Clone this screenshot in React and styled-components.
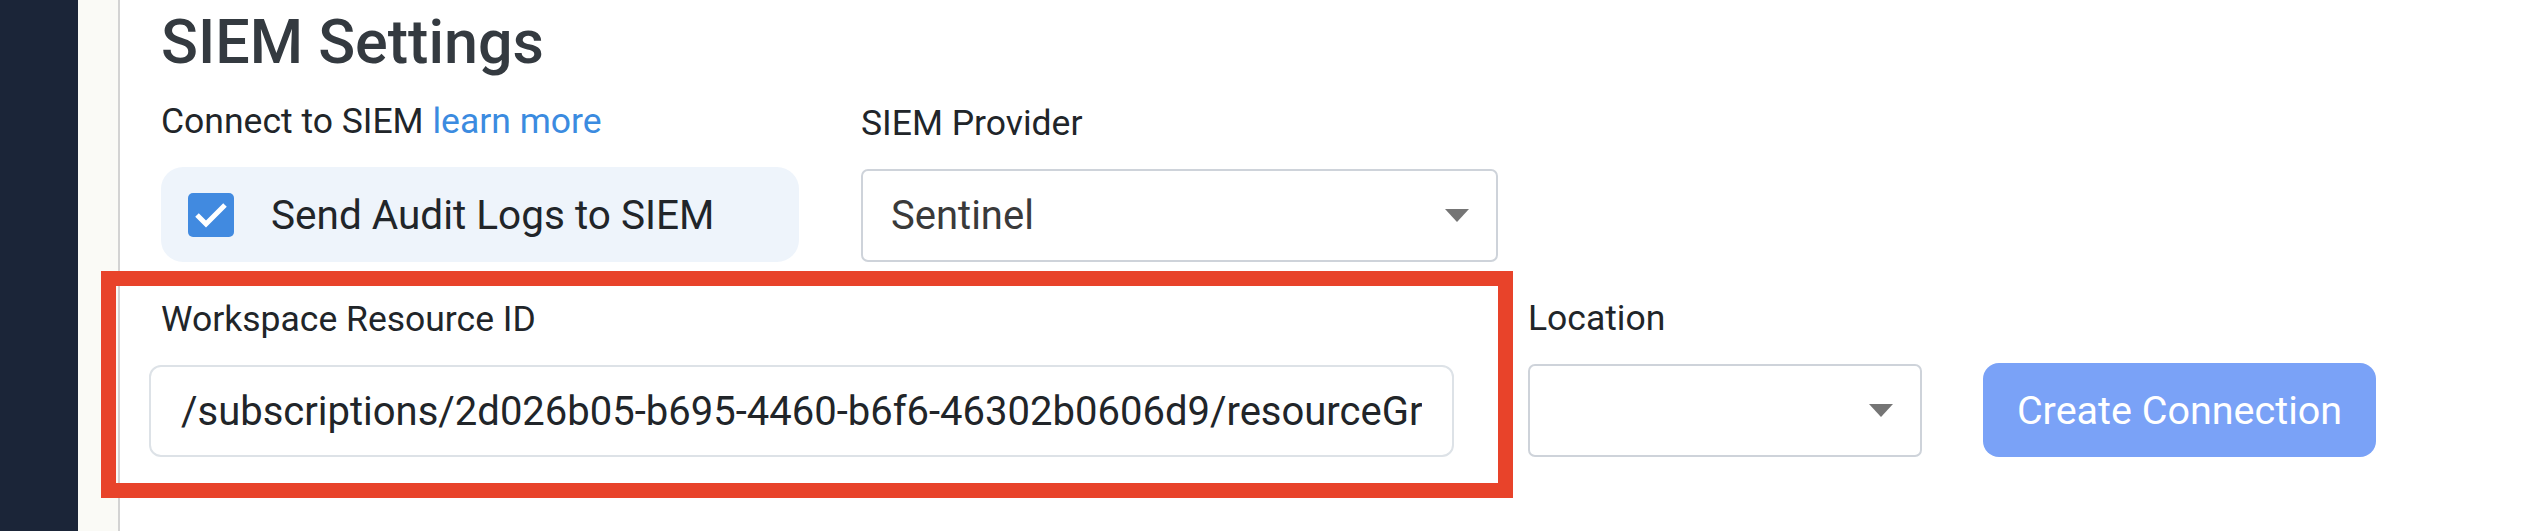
import React from "react";
import styled, { createGlobalStyle } from "styled-components";

const GlobalStyle = createGlobalStyle`
  html, body {
    margin: 0;
    padding: 0;
    background: #ffffff;
  }
  body {
    font-family: Roboto, "Liberation Sans", Arial, sans-serif;
    color: #212529;
  }
`;

const Page = styled.div`
  display: flex;
  min-height: 100vh;
`;

const Sidebar = styled.aside`
  width: 78px;
  flex-shrink: 0;
  background-color: #1b2538;
`;

const Gutter = styled.div`
  width: 40px;
  flex-shrink: 0;
  background-color: #fafaf6;
  border-right: 2px solid #d3d3d3;
`;

const Main = styled.main`
  flex: 1;
  padding: 5px 0 0 41px;
`;

const Title = styled.h1`
  margin: 0;
  font-size: 61px;
  line-height: 74px;
  font-weight: 500;
  color: #343a40;
`;

const Row = styled.div`
  display: flex;
  align-items: flex-end;
  gap: ${(p) => p.gap || 62}px;
  margin-top: ${(p) => p.top || 0}px;
  margin-left: ${(p) => p.shift || 0}px;
`;

const Field = styled.div`
  position: relative;
  display: flex;
  flex-direction: column;
  gap: 25px;
  width: ${(p) => p.width}px;

  /* red call-out frame drawn over the field */
  ${(p) =>
    p.highlight &&
    `
    &::after {
      content: "";
      position: absolute;
      top: -27px;
      left: -48px;
      right: -59px;
      bottom: -41px;
      border: 15px solid #e8432a;
      pointer-events: none;
    }
  `}
`;

const Label = styled.label`
  display: block;
  font-size: 35.5px;
  line-height: 42px;
  color: #212529;
  padding-left: ${(p) => p.indent || 0}px;
  white-space: nowrap;

  a {
    color: #3b8be0;
    text-decoration: none;
  }
`;

const CheckRow = styled.div`
  display: flex;
  align-items: center;
  gap: 37px;
  height: 95px;
  padding-left: 27px;
  box-sizing: border-box;
  background-color: #eef4fb;
  border-radius: 22px;
  font-size: 40.5px;
  color: #212529;
  white-space: nowrap;
`;

const CheckBox = styled.span`
  display: flex;
  align-items: center;
  justify-content: center;
  width: 46px;
  height: 44px;
  border-radius: 5px;
  background-color: #418ae0;
`;

const Select = styled.div`
  display: flex;
  align-items: center;
  justify-content: space-between;
  height: ${(p) => p.height || 93}px;
  box-sizing: border-box;
  padding: 0 27px 0 28px;
  border: 2px solid #ced3da;
  border-radius: 7px;
  background: #ffffff;
  font-size: 40px;
  color: #3a3a3a;
`;

const Caret = styled.span`
  width: 0;
  height: 0;
  border-left: 12.5px solid transparent;
  border-right: 12.5px solid transparent;
  border-top: 13px solid #757575;
`;

const TextInput = styled.input`
  height: 92px;
  width: 100%;
  box-sizing: border-box;
  padding: 0 30px;
  border: 2px solid #dde2e7;
  border-radius: 12px;
  font-family: Roboto, "Liberation Sans", Arial, sans-serif;
  font-size: 40px;
  color: #212529;
  background: #ffffff;
  outline: none;
`;

const Button = styled.button`
  width: 393px;
  height: 94px;
  border: none;
  border-radius: 16px;
  background-color: #7aa2f7;
  color: #ffffff;
  font-family: Roboto, "Liberation Sans", Arial, sans-serif;
  font-size: 39.5px;
  cursor: not-allowed;
`;

const resourceId =
  "/subscriptions/2d026b05-b695-4460-b6f6-46302b0606d9/resourceGroups/siem-logs/providers/Microsoft.OperationalInsights/workspaces/sentinel";

const App = () => {
  return (
    <>
      <GlobalStyle />
      <Page>
        <Sidebar />
        <Gutter />
        <Main>
          <Title>SIEM Settings</Title>

          <Row top={21}>
            <Field width={638}>
              <Label>
                Connect to SIEM <a href="#siem">learn more</a>
              </Label>
              <CheckRow>
                <CheckBox>
                  <svg width="34" height="28" viewBox="0 0 34 28">
                    <path
                      d="M3 14 L12 23 L31 4"
                      fill="none"
                      stroke="#ffffff"
                      strokeWidth="5"
                    />
                  </svg>
                </CheckBox>
                Send Audit Logs to SIEM
              </CheckRow>
            </Field>
            <Field width={637}>
              <Label>SIEM Provider</Label>
              <Select>
                Sentinel
                <Caret />
              </Select>
            </Field>
          </Row>

          <Row top={35} shift={-12} gap={74}>
            <Field width={1305} highlight>
              <Label indent={12}>Workspace Resource ID</Label>
              <TextInput readOnly value={resourceId} />
            </Field>
            <Row gap={61}>
              <Field width={394}>
                <Label>Location</Label>
                <Select>
                  <span />
                  <Caret />
                </Select>
              </Field>
              <Button disabled>Create Connection</Button>
            </Row>
          </Row>
        </Main>
      </Page>
    </>
  );
};

export default App;
